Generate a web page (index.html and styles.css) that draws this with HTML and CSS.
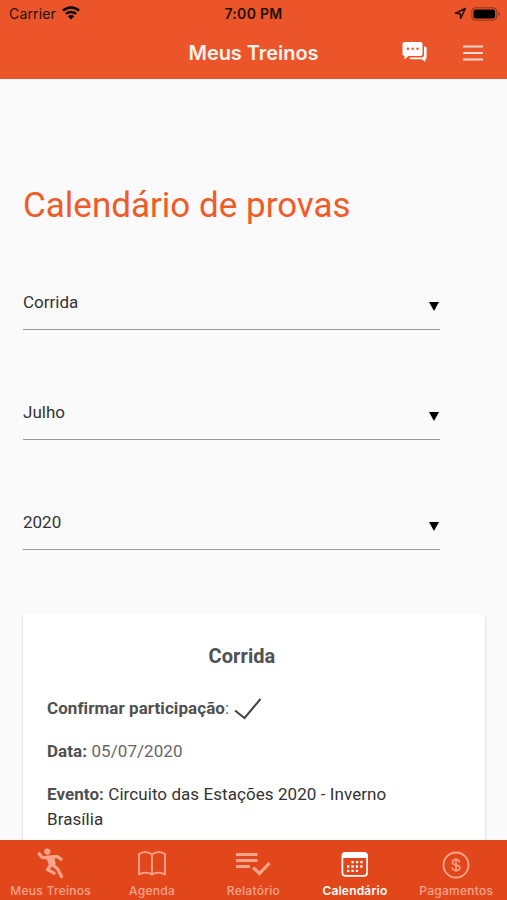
FILE: index.html
```html
<!DOCTYPE html>
<html lang="pt-BR">
<head>
<meta charset="utf-8">
<title>Meus Treinos</title>
<link rel="stylesheet" href="styles.css">
</head>
<body>
<div class="app">
  <header class="header">
    <div class="status">
      <div class="status-left">
        <span>Carrier</span>
        <svg class="wifi" width="18" height="14" viewBox="0 0 18 14">
          <path d="M1 4.700C5.500.3 12.500.3 17 4.700M3.900 7.900c2.900-2.700 7.300-2.700 10.200 0" fill="none" stroke="currentColor" stroke-width="2.500"/>
          <path d="M5.800 10.300c1.800-1.600 4.600-1.600 6.400 0L9 13.500z" fill="currentColor"/>
        </svg>
      </div>
      <span class="clock">7:00 PM</span>
      <div class="status-right">
        <svg width="13" height="13" viewBox="0 0 13 13"><path d="M11.300 1.500 1.500 6.200l4.700.5.400 4.800z" fill="none" stroke="currentColor" stroke-width="1.500" stroke-linejoin="round"/></svg>
        <svg width="30" height="14" viewBox="0 0 30 14"><rect x=".8" y=".8" width="25" height="12.400" rx="3.500" fill="none" stroke="#000" stroke-opacity=".4"/><rect x="2.500" y="2.500" width="21.600" height="9" rx="2" fill="#000"/><path d="M27.300 4.800c2 .8 2 3.600 0 4.400z" fill="#000" fill-opacity=".4"/></svg>
      </div>
    </div>
    <div class="toolbar">
      <h1>Meus Treinos</h1>
      <div class="actions">
        <svg width="26" height="21" viewBox="0 0 26 21">
          <path fill="#fff" d="M3.500 0h16A2 2 0 0 1 21.500 2v10a2 2 0 0 1-2 2H7.300L3.500 17.500V14a2 2 0 0 1-2-2V2a2 2 0 0 1 2-2z"/>
          <path fill="#fff" d="M23 4.500h.8a1.800 1.800 0 0 1 1.800 1.800v9.200a1.800 1.800 0 0 1-1.300 1.800v2.700L20.800 17.300H10a1.800 1.800 0 0 1-1.700-1.800h11.900a2.800 2.800 0 0 0 2.800-2.800z"/>
          <g fill="#eb5529"><circle cx="6.900" cy="6.800" r="1.250"/><circle cx="11.700" cy="6.800" r="1.250"/><circle cx="16.500" cy="6.800" r="1.250"/></g>
        </svg>
        <svg width="20" height="16" viewBox="0 0 20 16"><path d="M0 1.500h20M0 8h20M0 14.500h20" stroke="#ffd9cc" stroke-width="2"/></svg>
      </div>
    </div>
  </header>

  <main class="content">
    <h2>Calendário de provas</h2>
    <div class="field"><span>Corrida</span><svg width="10" height="9" viewBox="0 0 10 9"><path d="M0 0h10L5 9z"/></svg></div>
    <div class="field"><span>Julho</span><svg width="10" height="9" viewBox="0 0 10 9"><path d="M0 0h10L5 9z"/></svg></div>
    <div class="field"><span>2020</span><svg width="10" height="9" viewBox="0 0 10 9"><path d="M0 0h10L5 9z"/></svg></div>
    <section class="card">
      <h3>Corrida</h3>
      <p class="confirm"><span><b>Confirmar participação</b>:</span><svg width="28" height="22" viewBox="0 0 28 22"><path d="M1 12.500 10.500 20 26.500 1" fill="none" stroke="#444" stroke-width="2"/></svg></p>
      <p class="date"><b>Data:</b> 05/07/2020</p>
      <p class="event"><b>Evento:</b> Circuito das Estações 2020 - Inverno Brasília</p>
    </section>
  </main>

  <nav class="tabs">
    <a class="tab">
      <svg width="28" height="32" viewBox="0 0 28 32">
        <circle cx="10.300" cy="3.600" r="3.100" fill="currentColor"/>
        <path d="M8.500 7.800 17 7l1.800 9.500-6.300 2.500z" fill="currentColor"/>
        <path d="M2.200 5.800 5 9.300l7 .7M16 8.600h4.500l3.700 2.600M15 16.500l5.300 4 4.200 8M13.500 17.500l-3 4.200 6.500 3.500" fill="none" stroke="currentColor" stroke-width="3.200" stroke-linecap="round" stroke-linejoin="round"/>
      </svg>
      <span>Meus Treinos</span>
    </a>
    <a class="tab">
      <svg width="28" height="32" viewBox="0 0 28 32"><path d="M14 6.500C10.500 3.500 4.500 3.500 1 6v20.500c3.500-2.500 9.500-2.500 13 0 3.500-2.500 9.500-2.500 13 0V6C23.500 3.500 17.500 3.500 14 6.500zM14 6.500v20" fill="none" stroke="currentColor" stroke-width="1.800" stroke-linejoin="round"/></svg>
      <span>Agenda</span>
    </a>
    <a class="tab">
      <svg width="36" height="32" viewBox="0 0 36 32"><path d="M1 6.500h21.500M1 12.500h21.500M1 18.500h14" fill="none" stroke="currentColor" stroke-width="3"/><path d="M18 19.500l6.500 6L34.500 15" fill="none" stroke="currentColor" stroke-width="3.200"/></svg>
      <span>Relatório</span>
    </a>
    <a class="tab active">
      <svg width="28" height="32" viewBox="0 0 28 32"><rect x="1.400" y="4.900" width="24.700" height="23" rx="3.200" fill="none" stroke="currentColor" stroke-width="1.700"/><path d="M1 10V7.500A3 3 0 0 1 4 4.500h19.500a3 3 0 0 1 3 3V10z" fill="currentColor"/><path d="M10.500 14.200h11.200M6 18.500h15.700M6 22.800h11" fill="none" stroke="currentColor" stroke-width="2.300" stroke-dasharray="2.300 2.100"/></svg>
      <span>Calendário</span>
    </a>
    <a class="tab">
      <svg width="28" height="32" viewBox="0 0 28 32"><circle cx="14" cy="17" r="12.500" fill="none" stroke="currentColor" stroke-width="1.800"/><path d="M17.700 14.300c-.3-1.700-1.700-2.500-3.600-2.500-2.200 0-3.700 1-3.700 2.600 0 3.600 7.500 1.600 7.500 5.300 0 1.700-1.500 2.700-3.900 2.700-2.200 0-3.700-1-3.900-2.900M14 10v14" fill="none" stroke="currentColor" stroke-width="1.500"/></svg>
      <span>Pagamentos</span>
    </a>
  </nav>
</div>
</body>
</html>
```
FILE: styles.css
```css
* { box-sizing: border-box; }
body { margin: 0; font-family: Roboto, sans-serif; background: #fafafa; color: #333; }
h1, h2, h3, p { margin: 0; }
svg { display: block; flex: none; }
.app { width: 507px; height: 900px; display: flex; flex-direction: column; overflow: hidden; }

.header { height: 79px; flex: none; background: #eb5529; font-family: Inter, sans-serif; }
.status { height: 27px; padding: 0 6px 0 9px; display: grid; grid-template-columns: 1fr auto 1fr; align-items: center; color: #20100a; font-size: 14px; }
.status-left { display: flex; align-items: center; gap: 6px; letter-spacing: .15px; }
.wifi { color: #000; margin-top: -2px; }
.clock { font-weight: 600; font-size: 14px; letter-spacing: .3px; margin-right: 3px; }
.status-right { display: flex; align-items: center; justify-content: flex-end; gap: 4px; }
.toolbar { height: 52px; padding: 0 24px; display: grid; grid-template-columns: 1fr auto 1fr; align-items: center; }
.toolbar h1 { grid-column: 2; color: #fff3ee; font-size: 20px; font-weight: 600; letter-spacing: -.05px; margin-top: -1px; }
.actions { display: flex; justify-content: flex-end; align-items: center; gap: 36px; margin-top: -1px; }

.content { flex: 1; min-height: 0; overflow: hidden; padding: 104px 22px 0 23px; }
.content h2 { height: 46px; line-height: 46px; font-size: 35px; font-weight: 400; color: #f15a29; white-space: nowrap; }
.field { width: 417px; height: 40px; margin-top: 70px; padding: 0 1px 16px 0; display: flex; justify-content: space-between; align-items: center; border-bottom: 1px solid #999; font-size: 17px; }
.field:first-of-type { margin-top: 61px; }
.field svg { margin-top: 9px; }

.card { width: 462px; height: 300px; margin-top: 64px; padding: 28px 24px; background: #fff; box-shadow: 0 2px 3px rgba(0, 0, 0, .18); font-size: 17px; line-height: 25px; letter-spacing: .07px; color: #666; }
.card h3 { height: 28px; line-height: 28px; text-align: center; font-size: 20px; font-weight: 700; color: #505050; padding-right: 24px; }
.card b { color: #505050; font-weight: 700; }
.confirm { display: flex; align-items: center; gap: 5px; height: 26px; margin-top: 25px; }
.confirm svg { margin-top: 2px; }
.date { margin-top: 18px; }
.event { margin-top: 18px; color: #333; width: 370px; }

.tabs { height: 60px; flex: none; display: grid; grid-template-columns: repeat(5, 1fr); background: #e2471c; font-family: Inter, sans-serif; color: #f6a58d; }
.tab { display: flex; flex-direction: column; align-items: center; padding-top: 8px; gap: 3px; font-size: 12px; line-height: 16px; font-weight: 500; letter-spacing: .28px; }
.active { color: #fff; font-weight: 600; letter-spacing: .2px; }
```
